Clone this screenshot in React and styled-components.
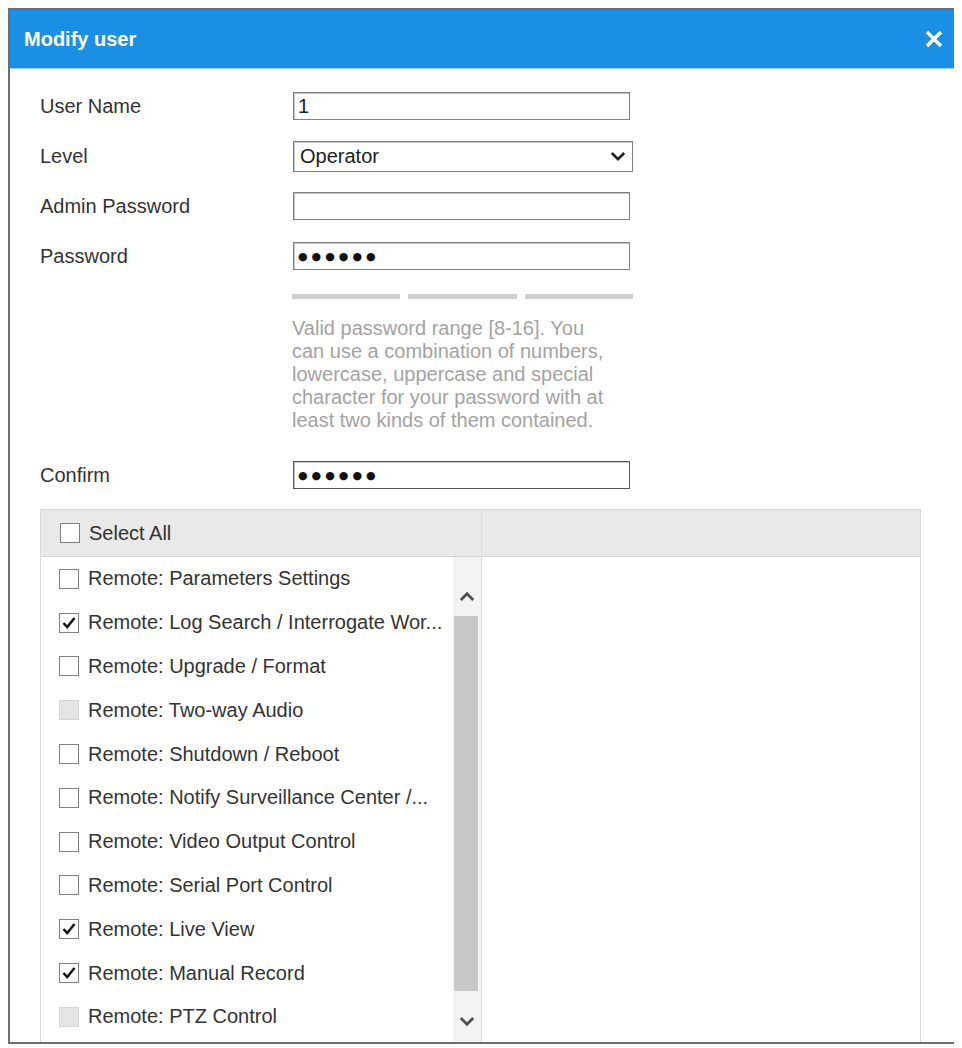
import React from "react";
import styled, { createGlobalStyle } from "styled-components";

const GlobalStyle = createGlobalStyle`
  body {
    margin: 8px;
    background: #fff;
    font-family: "Liberation Sans", Arial, sans-serif;
  }
`;

const Dialog = styled.div`
  width: 952px;
  height: 1036px;
  box-sizing: border-box;
  border: 2px solid #6e6e6e;
  overflow: hidden;
  display: flex;
  flex-direction: column;
  background: #fff;
`;

const Header = styled.div`
  flex: none;
  height: 59px;
  box-sizing: border-box;
  background: #1a8fe3;
  border-bottom: 1px solid #9ad3f6;
  display: flex;
  align-items: center;
  justify-content: space-between;
  padding: 0 14px 0 14px;
`;

const Title = styled.div`
  color: #fff;
  font-size: 20px;
  font-weight: bold;
`;

const CloseButton = styled.div`
  width: 20px;
  height: 20px;
  display: flex;
  cursor: pointer;
`;

const Body = styled.div`
  flex: 1;
  overflow: hidden;
  padding: 23px 0 0 30px;
  display: flex;
  flex-direction: column;
`;

const FieldGroup = styled.div`
  display: flex;
  flex-direction: column;
  gap: 22px;
`;

const Field = styled.div`
  display: flex;
  align-items: center;
  height: 28px;
  margin-top: ${(p) => p.$top || 0}px;
`;

const Label = styled.div`
  flex: none;
  width: 253px;
  font-size: 20px;
  color: #333;
`;

const TextBox = styled.div`
  width: ${(p) => (p.$select ? 340 : 337)}px;
  height: ${(p) => (p.$select ? 31 : 28)}px;
  box-sizing: border-box;
  border: 1px solid ${(p) => (p.$dark ? "#555" : "#808080")};
  box-shadow: inset 1px 1px 0 #c4c4c4;
  padding: 0 ${(p) => (p.$select ? 6 : 4)}px;
  display: flex;
  align-items: center;
  justify-content: space-between;
  font-size: 20px;
  color: #222;
  background: #fff;
`;

const Dots = styled.span`
  font-family: "DejaVu Sans", sans-serif;
  font-size: 11px;
  letter-spacing: 4px;
  color: #111;
`;

const Strength = styled.div`
  margin: 24px 0 0 252px;
  width: 341px;
  display: grid;
  grid-template-columns: repeat(3, 1fr);
  column-gap: 8px;
`;

const StrengthBar = styled.div`
  height: 5px;
  background: #cfcfcf;
`;

const Hint = styled.div`
  margin: 18px 0 0 252px;
  width: 325px;
  font-size: 20px;
  line-height: 23px;
  color: #a3a3a3;
`;

const Table = styled.div`
  margin-top: 20px;
  width: 881px;
  flex: none;
  box-sizing: border-box;
  border: 1px solid #d9d9d9;
  border-bottom: none;
  display: grid;
  grid-template-columns: 441px 1fr;
  grid-template-rows: 47px 500px;
`;

const HeadCell = styled.div`
  box-sizing: border-box;
  background: #e9e9e9;
  border-bottom: 1px solid #d3d3d3;
  border-right: ${(p) => (p.$divider ? "1px solid #dadada" : "none")};
  display: flex;
  align-items: center;
  gap: 9px;
  padding-left: 19px;
  font-size: 20px;
  color: #333;
`;

const LeftPane = styled.div`
  box-sizing: border-box;
  border-right: 1px solid #dadada;
  display: flex;
`;

const List = styled.div`
  flex: 1;
  display: flex;
  flex-direction: column;
`;

const Row = styled.div`
  height: 43.8px;
  flex: none;
  display: flex;
  align-items: center;
  gap: 9px;
  padding-left: 18px;
  font-size: 20px;
  color: #333;
  white-space: nowrap;
`;

const Box = styled.span`
  flex: none;
  width: 20px;
  height: 20px;
  box-sizing: border-box;
  border: 1px solid ${(p) => (p.$disabled ? "#d6d6d6" : "#808080")};
  background: ${(p) => (p.$disabled ? "#e4e4e4" : "#fff")};
  display: flex;
  align-items: center;
  justify-content: center;
`;

const ScrollBar = styled.div`
  flex: none;
  width: 28px;
  background: #f3f3f3;
  display: flex;
  flex-direction: column;
`;

const ScrollArrow = styled.div`
  flex: ${(p) => (p.$down ? 1 : "none")};
  height: ${(p) => (p.$down ? "auto" : "59px")};
  box-sizing: border-box;
  display: flex;
  justify-content: center;
  align-items: ${(p) => (p.$down ? "flex-start" : "flex-end")};
  padding: ${(p) => (p.$down ? "25px 0 0" : "0 0 14px")};
`;

const Thumb = styled.div`
  flex: none;
  height: 375px;
  margin: 0 3px 0 1px;
  background: #c8c8c8;
`;

const RightPane = styled.div`
  background: #fff;
`;

const Chevron = ({ up, color = "#505050", width = 2.8 }) => (
  <svg width="16" height="11" viewBox="0 0 16 11">
    <path
      d={up ? "M1.8 9 L8 2.8 L14.2 9" : "M1.8 2 L8 8.2 L14.2 2"}
      fill="none"
      stroke={color}
      strokeWidth={width}
    />
  </svg>
);

const Check = ({ checked, disabled }) => (
  <Box $disabled={disabled}>
    {checked && (
      <svg width="14" height="14" viewBox="0 0 14 14">
        <path d="M1.5 7 L5.2 11 L12.5 2" fill="none" stroke="#111" strokeWidth="2.5" />
      </svg>
    )}
  </Box>
);

const rights = [
  { label: "Remote: Parameters Settings" },
  { label: "Remote: Log Search / Interrogate Wor...", checked: true },
  { label: "Remote: Upgrade / Format" },
  { label: "Remote: Two-way Audio", disabled: true },
  { label: "Remote: Shutdown / Reboot" },
  { label: "Remote: Notify Surveillance Center /..." },
  { label: "Remote: Video Output Control" },
  { label: "Remote: Serial Port Control" },
  { label: "Remote: Live View", checked: true },
  { label: "Remote: Manual Record", checked: true },
  { label: "Remote: PTZ Control", disabled: true },
];

export default function App() {
  return (
    <>
      <GlobalStyle />
      <Dialog>
        <Header>
          <Title>Modify user</Title>
          <CloseButton>
            <svg width="20" height="20" viewBox="0 0 20 20">
              <path d="M3 3 L17 17 M17 3 L3 17" stroke="#fff" strokeWidth="3.4" />
            </svg>
          </CloseButton>
        </Header>
        <Body>
          <FieldGroup>
            <Field>
              <Label>User Name</Label>
              <TextBox>1</TextBox>
            </Field>
            <Field>
              <Label>Level</Label>
              <TextBox $select>
                Operator
                <Chevron color="#222" width={2.6} />
              </TextBox>
            </Field>
            <Field>
              <Label>Admin Password</Label>
              <TextBox />
            </Field>
            <Field>
              <Label>Password</Label>
              <TextBox>
                <Dots>●●●●●●</Dots>
              </TextBox>
            </Field>
          </FieldGroup>
          <Strength>
            <StrengthBar />
            <StrengthBar />
            <StrengthBar />
          </Strength>
          <Hint>
            Valid password range [8-16]. You can use a combination of numbers,
            lowercase, uppercase and special character for your password with at
            least two kinds of them contained.
          </Hint>
          <Field $top={29}>
            <Label>Confirm</Label>
            <TextBox $dark>
              <Dots>●●●●●●</Dots>
            </TextBox>
          </Field>
          <Table>
            <HeadCell $divider>
              <Check />
              Select All
            </HeadCell>
            <HeadCell />
            <LeftPane>
              <List>
                {rights.map((r) => (
                  <Row key={r.label}>
                    <Check checked={r.checked} disabled={r.disabled} />
                    {r.label}
                  </Row>
                ))}
              </List>
              <ScrollBar>
                <ScrollArrow>
                  <Chevron up />
                </ScrollArrow>
                <Thumb />
                <ScrollArrow $down>
                  <Chevron />
                </ScrollArrow>
              </ScrollBar>
            </LeftPane>
            <RightPane />
          </Table>
        </Body>
      </Dialog>
    </>
  );
}
